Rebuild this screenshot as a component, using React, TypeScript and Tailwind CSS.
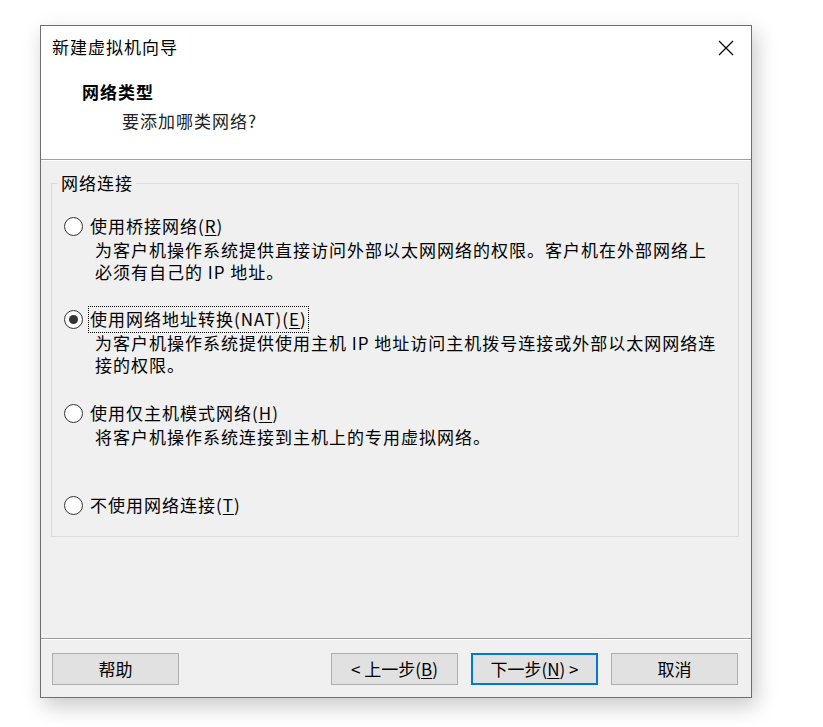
import { useState } from "react";

const font = { fontFamily: '"Noto Sans CJK SC", "Noto Sans", sans-serif' };

type Opt = {
  id: string;
  label: string;
  key: string;
  suffix?: string;
  desc: string[];
  gapTop: string;
};

const options: Opt[] = [
  {
    id: "bridge",
    label: "使用桥接网络(",
    key: "R",
    suffix: ")",
    desc: [
      "为客户机操作系统提供直接访问外部以太网网络的权限。客户机在外部网络上",
      "必须有自己的 IP 地址。",
    ],
    gapTop: "mt-[30px]",
  },
  {
    id: "nat",
    label: "使用网络地址转换(NAT)(",
    key: "E",
    suffix: ")",
    desc: [
      "为客户机操作系统提供使用主机 IP 地址访问主机拨号连接或外部以太网网络连",
      "接的权限。",
    ],
    gapTop: "mt-[24px]",
  },
  {
    id: "host",
    label: "使用仅主机模式网络(",
    key: "H",
    suffix: ")",
    desc: ["将客户机操作系统连接到主机上的专用虚拟网络。"],
    gapTop: "mt-[25px]",
  },
  {
    id: "none",
    label: "不使用网络连接(",
    key: "T",
    suffix: ")",
    desc: [],
    gapTop: "mt-[45px]",
  },
];

function Radio({ checked }: { checked: boolean }) {
  return (
    <span className="w-[19px] h-[19px] rounded-full border border-[#333] bg-white flex items-center justify-center shrink-0">
      {checked && <span className="w-[9px] h-[9px] rounded-full bg-[#333]" />}
    </span>
  );
}

function Btn({
  children,
  primary,
}: {
  children: React.ReactNode;
  primary?: boolean;
}) {
  return (
    <button
      className={
        "w-[127px] h-[32px] bg-[#e1e1e1] text-[17px] text-black flex items-center justify-center " +
        (primary ? "border-2 border-[#0078d7]" : "border border-[#adadad]")
      }
    >
      {children}
    </button>
  );
}

export default function App() {
  const [selected, setSelected] = useState("nat");

  return (
    <div className="w-[823px] h-[727px] bg-white pl-[40px] pt-[25px]" style={font}>
      <div className="w-[712px] h-[673px] border border-[#6e6e6e] flex flex-col bg-[#f0f0f0] shadow-[4px_8px_20px_rgba(0,0,0,0.22)]">
        {/* header */}
        <div className="h-[133px] bg-white relative pt-[10px] pl-[11px]">
          <div className="text-[17px] leading-[22px] text-black tracking-[1px]">新建虚拟机向导</div>
          <button className="absolute right-[17px] top-[14px] w-[16px] h-[16px]">
            <svg width="16" height="16" viewBox="0 0 16 16">
              <path d="M1 1 L15 15 M15 1 L1 15" stroke="#000" strokeWidth="1.2" fill="none" />
            </svg>
          </button>
          <div className="mt-[23px] pl-[30px] text-[17px] leading-[22px] font-bold text-black tracking-[1px]">
            网络类型
          </div>
          <div className="mt-[7px] pl-[70px] text-[17px] leading-[22px] text-[#222] tracking-[1px]">
            要添加哪类网络?
          </div>
        </div>
        <div className="h-px bg-[#a0a0a0]" />
        <div className="h-px bg-white" />

        {/* body */}
        <div className="flex-1 pt-[22px] pl-[10px] pr-[12px]">
          <div className="relative border border-[#dcdcdc] h-[354px] pl-[12px]">
            <div className="absolute left-[6px] top-[-12px] px-[3px] bg-[#f0f0f0] text-[17px] leading-[22px] text-black tracking-[1px]">
              网络连接
            </div>
            {options.map((o) => {
              const checked = selected === o.id;
              return (
                <div key={o.id} className={o.gapTop}>
                  <div
                    className="flex items-center h-[24px] cursor-default"
                    onClick={() => setSelected(o.id)}
                  >
                    <Radio checked={checked} />
                    <span
                      className={
                        "ml-[6px] px-[1px] h-[25px] flex items-center text-[17px] text-black tracking-[1px] " +
                        (checked ? "outline outline-1 outline-dotted outline-black" : "")
                      }
                    >
                      {o.label}
                      <span className="underline underline-offset-2">{o.key}</span>
                      {o.suffix}
                    </span>
                  </div>
                  {o.desc.length > 0 && (
                    <div className="pl-[31px] mt-px">
                      {o.desc.map((d) => (
                        <div
                          key={d}
                          className="text-[17px] leading-[22px] text-black tracking-[1px] whitespace-nowrap"
                        >
                          {d}
                        </div>
                      ))}
                    </div>
                  )}
                </div>
              );
            })}
          </div>
        </div>

        {/* footer */}
        <div className="h-px bg-[#a0a0a0]" />
        <div className="h-px bg-white" />
        <div className="h-[57px] flex items-start pt-[13px] pl-[11px] pr-[13px]">
          <Btn>帮助</Btn>
          <div className="flex-1" />
          <Btn>
            &lt;&nbsp;上一步(<span className="underline underline-offset-2">B</span>)
          </Btn>
          <div className="w-[13px]" />
          <Btn primary>
            下一步(<span className="underline underline-offset-2">N</span>)&nbsp;&gt;
          </Btn>
          <div className="w-[13px]" />
          <Btn>取消</Btn>
        </div>
      </div>
    </div>
  );
}
